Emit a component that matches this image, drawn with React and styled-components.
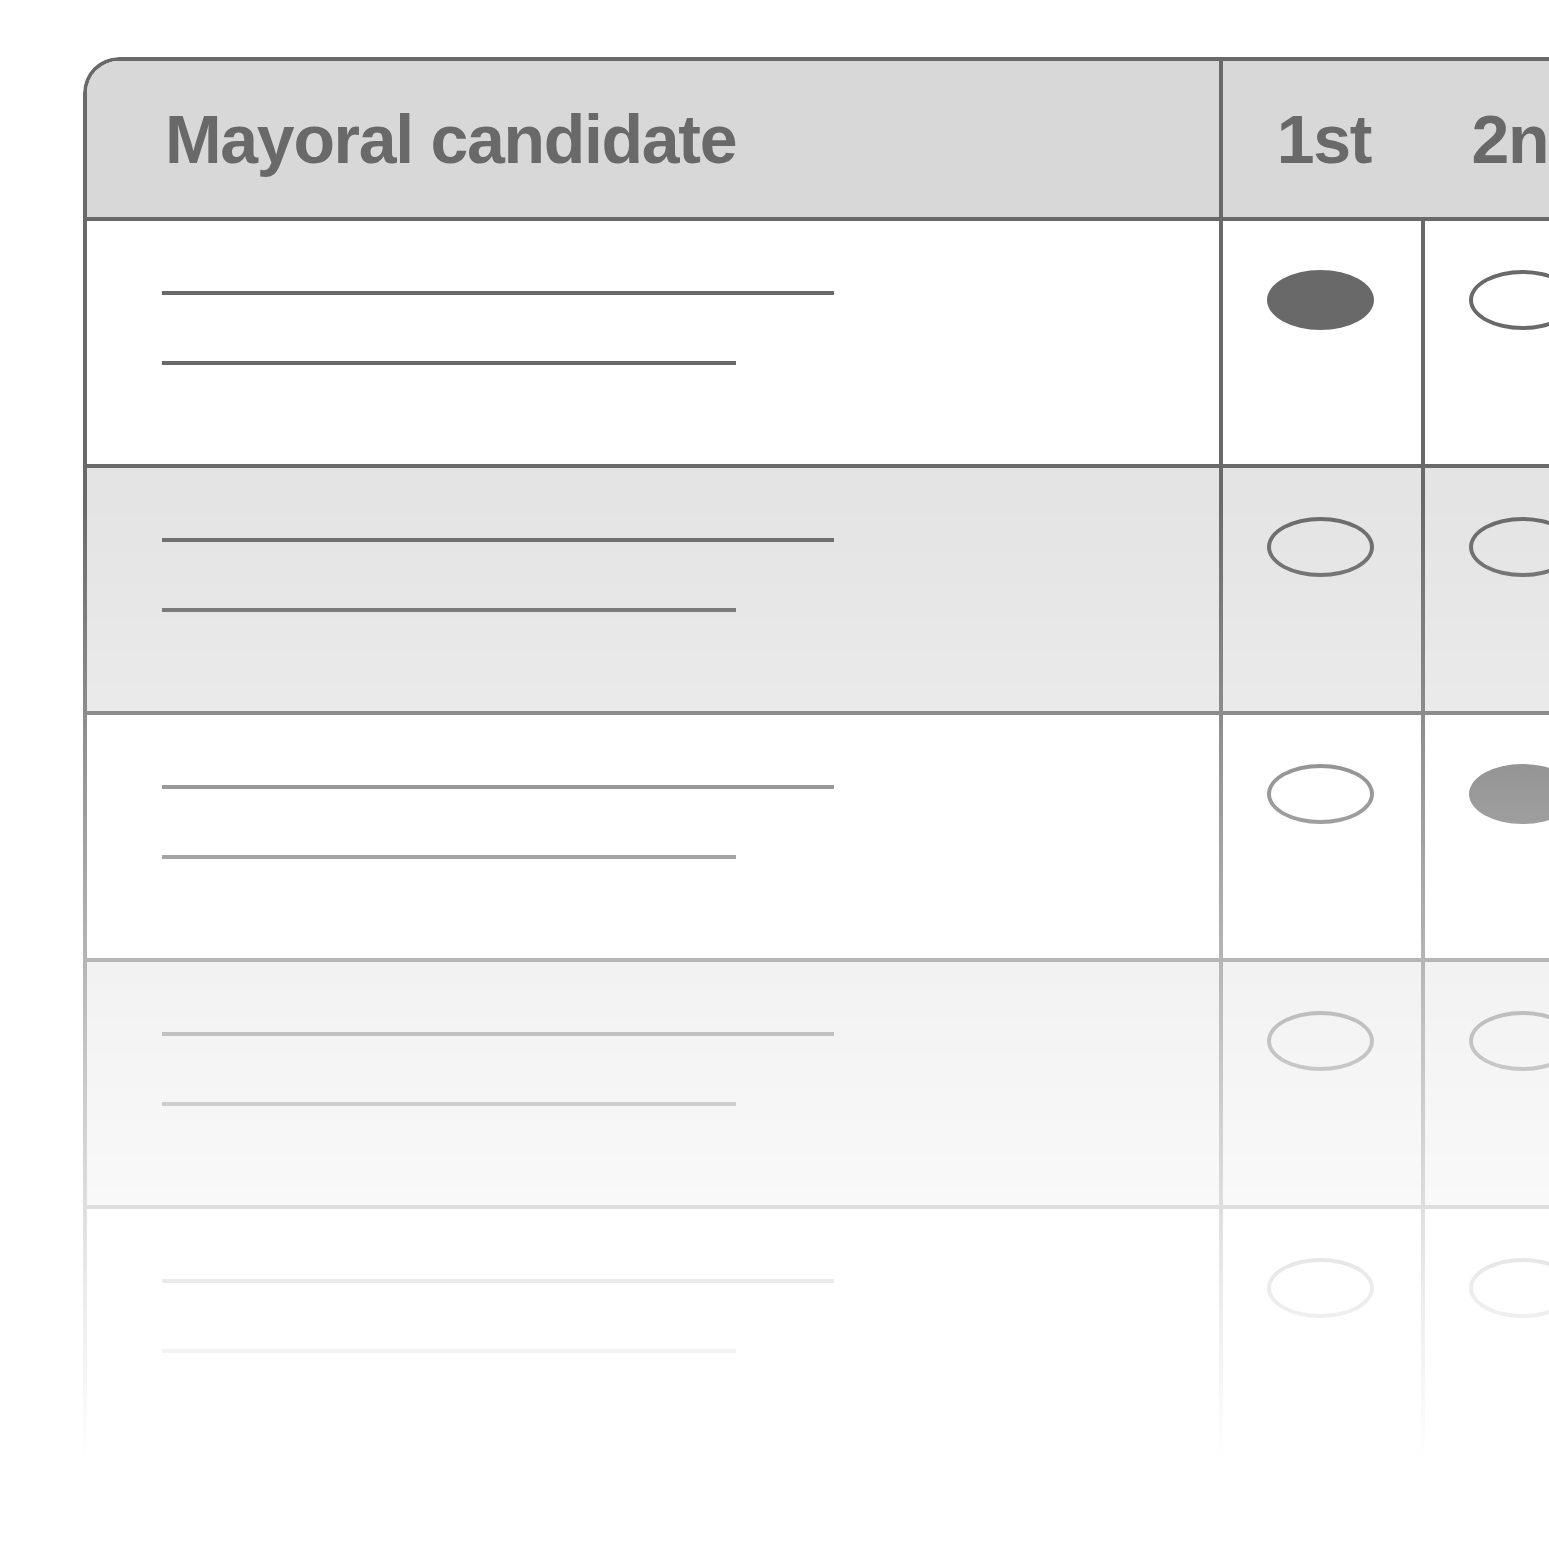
import React from "react";
import styled, { createGlobalStyle } from "styled-components";

const INK = "#696969";

const ranks = ["1st", "2nd", "3rd"];

// which rank bubble is marked in each candidate row
const candidates = [
  { marks: [true, false, false] },
  { marks: [false, false, false] },
  { marks: [false, true, false] },
  { marks: [false, false, false] },
  { marks: [false, false, false] },
];

function App() {
  return (
    <>
      <GlobalStyle />
      <Page>
        <Ballot>
          <HeaderRow>
            <NameHead>Mayoral candidate</NameHead>
            {ranks.map((r) => (
              <RankHead key={r}>{r}</RankHead>
            ))}
          </HeaderRow>

          {candidates.map((c, i) => (
            <Row key={i} $shaded={i % 2 === 1}>
              <NameCell>
                <NameLine $width={672} />
                <NameLine $width={574} />
              </NameCell>
              {c.marks.map((filled, j) => (
                <RankCell key={j}>
                  <Bubble $filled={filled} />
                </RankCell>
              ))}
            </Row>
          ))}
        </Ballot>
      </Page>
    </>
  );
}

export default App;

const GlobalStyle = createGlobalStyle`
  html, body {
    margin: 0;
    padding: 0;
    background: #fff;
    overflow: hidden;
  }
  body {
    font-family: "Liberation Sans", Arial, sans-serif;
  }
`;

const Page = styled.div`
  width: 1549px;
  height: 1549px;
  overflow: hidden;
  padding: 57px 0 0 83px;
  box-sizing: border-box;
`;

const fade = `linear-gradient(
    to bottom,
    #000 0px,
    #000 443px,
    rgba(0, 0, 0, 0.13) 1231px,
    rgba(0, 0, 0, 0) 1400px
  )`;

const Ballot = styled.div`
  width: max-content;
  border-left: 4px solid ${INK};
  border-top: 4px solid ${INK};
  border-top-left-radius: 36px;
  overflow: hidden;
  -webkit-mask-image: ${fade};
  mask-image: ${fade};
`;

const HeaderRow = styled.div`
  display: flex;
  height: 156px;
  background: #d8d8d8;
  border-bottom: 4px solid ${INK};
  color: ${INK};
  font-weight: 700;
  font-size: 68px;
  letter-spacing: -1.3px;
  line-height: 1;
`;

const NameHead = styled.div`
  width: 1136px;
  box-sizing: border-box;
  border-right: 4px solid ${INK};
  display: flex;
  align-items: center;
  padding-left: 78px;
`;

const RankHead = styled.div`
  width: 202px;
  padding-right: 4px;
  display: flex;
  align-items: center;
  justify-content: center;
`;

const Row = styled.div`
  display: flex;
  height: 247px;
  box-sizing: border-box;
  border-bottom: 4px solid ${INK};
  background: ${(p) => (p.$shaded ? "#e4e4e4" : "#fff")};
`;

const NameCell = styled.div`
  width: 1136px;
  box-sizing: border-box;
  border-right: 4px solid ${INK};
  padding: 70px 0 0 75px;
  display: flex;
  flex-direction: column;
  gap: 66px;
`;

const NameLine = styled.div`
  width: ${(p) => p.$width}px;
  height: 4px;
  background: ${INK};
`;

const RankCell = styled.div`
  width: 202px;
  box-sizing: border-box;
  border-right: 4px solid ${INK};
  padding: 49px 3px 0 0;
  display: flex;
  justify-content: center;
  align-items: flex-start;
`;

const Bubble = styled.div`
  width: 107px;
  height: 60px;
  box-sizing: border-box;
  border-radius: 50%;
  border: 4px solid ${INK};
  background: ${(p) => (p.$filled ? INK : "transparent")};
`;
